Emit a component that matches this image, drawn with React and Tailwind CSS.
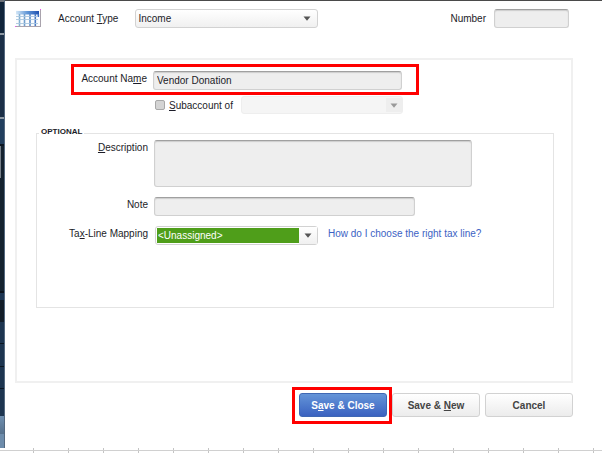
import React, { useState } from 'react';
import clsx from 'clsx';

const stripBlocks = [
    "h-[2px] bg-[#6b7078]",
    "h-[31px] bg-[#10243a]",
    "h-[2px] bg-[#8d98a3]",
    "h-[82px] bg-[#1b2f47]",
    "h-[2px] bg-[#8d98a3]",
    "h-[25px] bg-[#223f5e]",
    "h-[2px] bg-[#0c1622]",
    "h-[32px] bg-[#14222f] border-l border-[#77808a]",
    "h-[113px] bg-[#14222f]",
    "h-[2px] bg-[#0a121b]",
    "h-[7px] bg-[#1c3552]",
    "h-[22px] bg-[#121d28]",
    "h-[22px] bg-[#1d3550] border-b border-[#0b1520]",
    "h-[23px] bg-[#1d3550] border-b border-[#0b1520]",
    "h-[22px] bg-[#1d3550] border-b border-[#0b1520]",
    "h-[27px] bg-[#1d3550]",
    "h-[18px] bg-linear-to-b from-[#6f8fb0] to-[#56718c]",
    "h-[14px] bg-[#6d8cab]",
];

const fieldStyle = "block h-[19px] rounded-[3px] border border-[#d0d0d0] border-t-[#a0a0a0] bg-[#eeeeee] px-[3px] shadow-[inset_0_1px_1px_#cccccc] focus:outline-none";

const Arrow = ({ className }) => (
    <svg viewBox="0 0 8 5" className={clsx("h-[5px] w-[8px]", className)} aria-hidden="true">
        <path d="M0.5 0.5h7L4 4.7z" fill="currentColor" />
    </svg>
);

const TableIcon = () => (
    <svg viewBox="0 0 27 19" className="h-[19px] w-[27px] shrink-0" aria-hidden="true">
        <defs>
            <linearGradient id="tableHead" x1="0" x2="1">
                <stop offset="0" stopColor="#d5e8f7" />
                <stop offset="0.5" stopColor="#5f95d6" />
                <stop offset="1" stopColor="#1d50b0" />
            </linearGradient>
            <linearGradient id="tableLine" gradientUnits="userSpaceOnUse" x1="1" y1="0" x2="24" y2="0">
                <stop offset="0" stopColor="#8fbcd4" />
                <stop offset="1" stopColor="#3d6fc4" />
            </linearGradient>
        </defs>
        <path d="M1 1h24v16H1z" fill="#fafcfe" />
        <path d="M1 2h23v3.5H1z" fill="url(#tableHead)" />
        <path d="M4.5 5v12M9.5 5v12M15 5v12M20.3 5v12M23.3 5v3" stroke="url(#tableLine)" strokeWidth="1.6" />
        <path d="M1 7.5h22M1 10.5h22M1 14.5h22" stroke="#a9c6df" strokeWidth="0.9" />
        <path d="M25.5 1v17M0 17.5h26" stroke="#a9a3ad" strokeWidth="1" />
        <path d="M25 0h1v1h-1zM0 17h1v1H0z" fill="#f050f0" />
    </svg>
);

const Row = ({ id, label, labelWidth, className, children }) => (
    <div className={clsx("flex items-start", className)}>
        <label htmlFor={id} className={clsx("mr-[6px] shrink-0 text-right leading-[16px]", labelWidth)}>
            {label}
        </label>
        {children}
    </div>
);

const App = () => {
    const [accountType, setAccountType] = useState("Income");
    const [number, setNumber] = useState("");
    const [name, setName] = useState("Vendor Donation");
    const [subaccount, setSubaccount] = useState(false);
    const [description, setDescription] = useState("");
    const [note, setNote] = useState("");
    const [taxLine, setTaxLine] = useState("<Unassigned>");

    return (
        <div className="bg-white font-['Liberation_Sans',Arial,sans-serif] text-[10px] text-[#1c1c28]">
            <div className="flex">
                <div className="w-[5px] shrink-0 border-r border-[#53687f]">
                    {stripBlocks.map((block, index) => (
                        <div key={index} className={block} />
                    ))}
                </div>

                <form
                    onSubmit={(e) => e.preventDefault()}
                    className="min-w-0 flex-1 border-t border-[#4a4a4a] pr-[29px] pl-[10px]"
                >
                    <div className="flex items-center pt-[8px] pr-[4px]">
                        <TableIcon />
                        <label htmlFor="accountType" className="ml-[16px] shrink-0">
                            Account <u>T</u>ype
                        </label>
                        <div className="relative ml-[17px] w-[183px]">
                            <select
                                id="accountType"
                                value={accountType}
                                onChange={(e) => setAccountType(e.target.value)}
                                className="block h-[19px] w-full appearance-none rounded-[3px] border border-[#d2d2d2] bg-linear-to-b from-white to-[#f0f0f0] px-[2px] focus:outline-none"
                            >
                                <option>Income</option>
                                <option>Expense</option>
                            </select>
                            <Arrow className="pointer-events-none absolute top-[7px] right-[7px] text-[#555555]" />
                        </div>
                        <label htmlFor="number" className="ml-auto">Number</label>
                        <input
                            id="number"
                            type="text"
                            value={number}
                            onChange={(e) => setNumber(e.target.value)}
                            className={clsx(fieldStyle, "ml-[8px] w-[75px]")}
                        />
                    </div>

                    <div className="mt-[30px] border-2 border-[#f0f0f0] pt-[11px] pr-[17px] pb-[73px] pl-[19px]">
                        <div className="relative">
                            <Row id="name" label={<>Account Na<u>m</u>e</>} labelWidth="w-[111px]">
                                <input
                                    id="name"
                                    type="text"
                                    value={name}
                                    onChange={(e) => setName(e.target.value)}
                                    className={clsx(fieldStyle, "w-[249px]")}
                                />
                            </Row>
                            <div className="pointer-events-none absolute -top-[7px] left-[35px] h-[31px] w-[348px] border-3 border-[#ff0000]" />
                        </div>

                        <div className="mt-[6px] flex items-center pl-[119px]">
                            <input
                                id="subaccount"
                                type="checkbox"
                                checked={subaccount}
                                onChange={(e) => setSubaccount(e.target.checked)}
                                className="size-[10px] appearance-none rounded-[2px] border border-[#a8a8a8] bg-[#d4d4d4] checked:bg-[#555555]"
                            />
                            <label htmlFor="subaccount" className="ml-[4px]">
                                <u>S</u>ubaccount of
                            </label>
                            <div className="relative ml-[8px] w-[162px]">
                                <select
                                    disabled={!subaccount}
                                    aria-label="Parent account"
                                    className="block h-[18px] w-full appearance-none rounded-[3px] border border-[#eeeeee] bg-[#f5f5f5]"
                                />
                                <div className="pointer-events-none absolute inset-y-[2px] right-[1px] flex w-[16px] items-center justify-center bg-[#eeeeee]">
                                    <Arrow className="text-[#999999]" />
                                </div>
                            </div>
                        </div>

                        <fieldset className="mt-[14px] border border-[#e4e4e4] pt-[2px] pb-[62px]">
                            <legend className="ml-[2px] px-[2px] pb-[2px] text-[8px] leading-[8px] font-bold">
                                OPTIONAL
                            </legend>
                            <Row id="description" label={<><u>D</u>escription</>} labelWidth="w-[111px]">
                                <textarea
                                    id="description"
                                    value={description}
                                    onChange={(e) => setDescription(e.target.value)}
                                    className={clsx(fieldStyle, "h-[47px]! w-[318px] resize-none")}
                                />
                            </Row>
                            <Row id="note" label="Note" labelWidth="w-[111px]" className="mt-[10px]">
                                <input
                                    id="note"
                                    type="text"
                                    value={note}
                                    onChange={(e) => setNote(e.target.value)}
                                    className={clsx(fieldStyle, "w-[261px]")}
                                />
                            </Row>
                            <Row
                                id="taxLine"
                                label={<>Ta<u>x</u>-Line Mapping</>}
                                labelWidth="w-[111px]"
                                className="mt-[10px]"
                            >
                                <div className="relative ml-[1px] h-[19px] w-[163px] rounded-[3px] border border-[#d2d2d2] p-[1px]">
                                    <select
                                        id="taxLine"
                                        value={taxLine}
                                        onChange={(e) => setTaxLine(e.target.value)}
                                        className="block h-[15px] w-full appearance-none bg-[#4f9e1a] px-[1px] text-white focus:outline-none"
                                    >
                                        <option>{"<Unassigned>"}</option>
                                    </select>
                                    <div className="pointer-events-none absolute inset-y-0 right-0 flex w-[18px] items-center justify-center bg-linear-to-b from-white to-[#f0f0f0]">
                                        <Arrow className="text-[#555555]" />
                                    </div>
                                </div>
                                <a href="#" className="ml-[10px] leading-[16px] whitespace-nowrap text-[#3c62c4]">
                                    How do I choose the right tax line?
                                </a>
                            </Row>
                        </fieldset>
                    </div>

                    <div className="mt-[10px] flex justify-end gap-[5px] font-bold">
                        <div className="relative">
                            <button
                                type="submit"
                                className="block h-[24px] w-[88px] rounded-[3px] border border-[#3f68b4] bg-linear-to-b from-[#6494d8] to-[#3b62c0] text-white"
                            >
                                S<u>a</u>ve &amp; Close
                            </button>
                            <div className="pointer-events-none absolute -top-[6px] -right-[5px] -bottom-[7px] -left-[7px] border-3 border-[#ff0000]" />
                        </div>
                        <button
                            type="button"
                            className="h-[24px] w-[88px] rounded-[3px] border border-[#d2d2d2] bg-linear-to-b from-white to-[#ececec] text-[#444444]"
                        >
                            Save &amp; <u>N</u>ew
                        </button>
                        <button
                            type="button"
                            className="h-[24px] w-[88px] rounded-[3px] border border-[#d2d2d2] bg-linear-to-b from-white to-[#ececec] text-[#444444]"
                        >
                            Cancel
                        </button>
                    </div>
                </form>
            </div>

            {/* sheet edge under the dialog */}
            <div className="relative h-[5px] overflow-hidden">
                <div className="absolute inset-x-0 top-[2px] h-px bg-[#d0d0d0]" />
                <div className="flex h-full">
                    {Array.from({ length: 60 }, (_, index) => (
                        <div
                            key={index}
                            className="h-full w-[35px] shrink-0 border-r border-[#c4c4c4] first:w-[34px]"
                        />
                    ))}
                </div>
            </div>
        </div>
    );
};

export default App;
